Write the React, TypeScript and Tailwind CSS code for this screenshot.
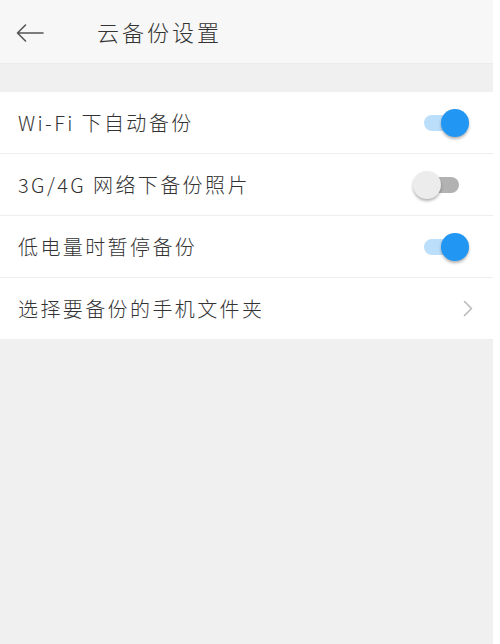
import { useState } from "react";

const font = {
  fontFamily: '"Noto Sans CJK SC", "Noto Sans", sans-serif',
};

function Toggle({ on, onChange }: { on: boolean; onChange: () => void }) {
  return (
    <button onClick={onChange} className="relative mr-[24px] h-[28px] w-[56px] shrink-0">
      <span
        className={
          on
            ? "absolute top-[6px] left-[11px] h-[16px] w-[35px] rounded-full bg-[#bbdefb]"
            : "absolute top-[6px] left-[11px] h-[16px] w-[35px] rounded-full bg-[#b2b2b2]"
        }
      />
      <span
        className={
          on
            ? "absolute top-0 left-[28px] h-[28px] w-[28px] rounded-full bg-[#2196f3] shadow-[0_2px_3px_rgba(0,0,0,0.3)]"
            : "absolute top-0 left-0 h-[28px] w-[28px] rounded-full bg-[#ececec] shadow-[0_2px_3px_rgba(0,0,0,0.3)]"
        }
      />
    </button>
  );
}

function Row({ label, children }: { label: string; children?: React.ReactNode }) {
  return (
    <div className="flex h-[62px] items-center justify-between border-b border-[#eeeeee] bg-white">
      <span className="pl-[18px] text-[20px] font-light tracking-[2.4px] text-[#333]" style={font}>
        {label}
      </span>
      {children}
    </div>
  );
}

export default function App() {
  const [wifi, setWifi] = useState(true);
  const [mobile, setMobile] = useState(false);
  const [lowPower, setLowPower] = useState(true);

  return (
    <div className="flex h-[644px] w-[493px] flex-col bg-[#f0f0f0]">
      <div className="flex h-16 shrink-0 items-center border-b border-[#ececec] bg-[#f7f7f7]">
        <svg
          width="28"
          height="18"
          viewBox="0 0 28 18"
          className="mt-[2px] ml-[16px]"
          fill="none"
          stroke="#555"
          strokeWidth="1.6"
          strokeLinecap="round"
          strokeLinejoin="round"
        >
          <path d="M27 9H1.5M9.5 1L1.5 9l8 8" />
        </svg>
        <span className="ml-[53px] text-[22px] font-light tracking-[3px] text-[#333]" style={font}>
          云备份设置
        </span>
      </div>

      <div className="h-[28px] shrink-0" />

      <Row label="Wi-Fi 下自动备份">
        <Toggle on={wifi} onChange={() => setWifi(!wifi)} />
      </Row>
      <Row label="3G/4G 网络下备份照片">
        <Toggle on={mobile} onChange={() => setMobile(!mobile)} />
      </Row>
      <Row label="低电量时暂停备份">
        <Toggle on={lowPower} onChange={() => setLowPower(!lowPower)} />
      </Row>
      <Row label="选择要备份的手机文件夹">
        <svg
          width="10"
          height="17"
          viewBox="0 0 10 17"
          className="mr-[20px]"
          fill="none"
          stroke="#bbbbbb"
          strokeWidth="1.6"
          strokeLinecap="round"
          strokeLinejoin="round"
        >
          <path d="M1.5 1.5l7 7-7 7" />
        </svg>
      </Row>
    </div>
  );
}
